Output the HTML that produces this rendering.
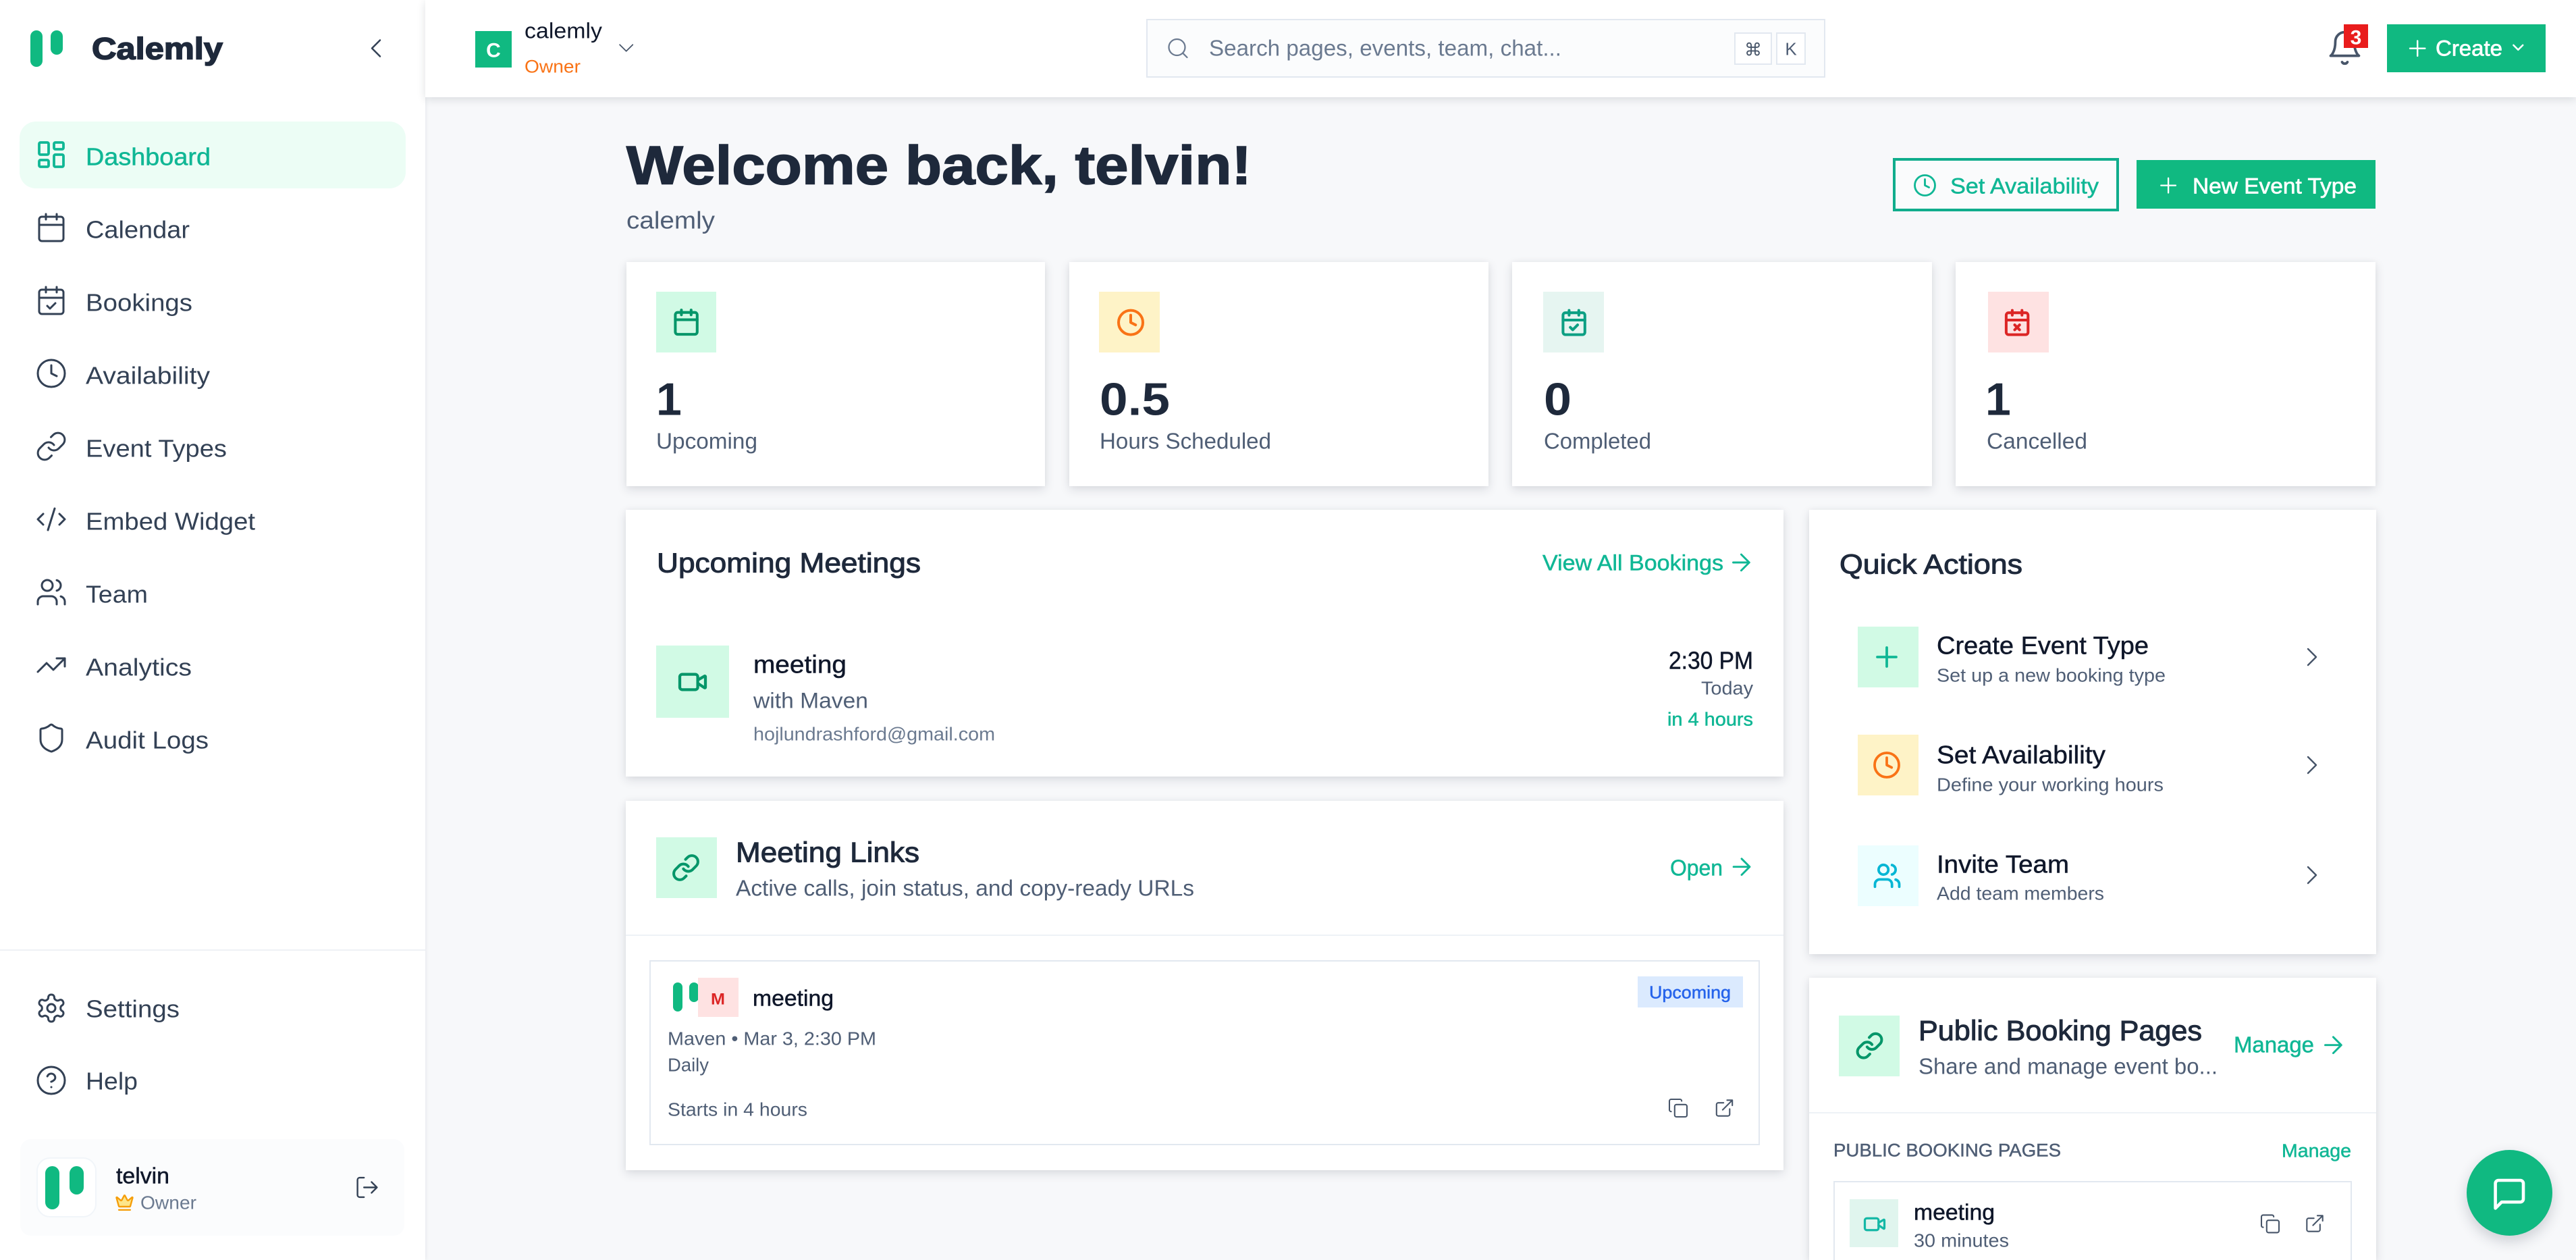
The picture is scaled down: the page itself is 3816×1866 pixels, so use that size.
<!DOCTYPE html>
<html lang="en"><head><meta charset="utf-8"><title>Calemly Dashboard</title>
<style>
html,body{margin:0;padding:0;width:3816px;height:1866px;overflow:hidden;background:#f7f8fa}
#root{position:relative;width:3816px;height:1866px;overflow:hidden;contain:paint}
.a{position:absolute;box-sizing:border-box}
.card{background:#fff;box-shadow:0 5px 14px rgba(30,41,59,.13),0 0 8px rgba(30,41,59,.04)}
svg{position:absolute;left:0;top:0}
text{font-family:"Liberation Sans",sans-serif;fill:#334155;transform:translateY(1.5px)}
.nav{font-size:36px;fill:#334155}
.ink{fill:#0f172a}.ti{fill:#1e293b}.sl{fill:#4f5e75}.mu{fill:#6b7a90}.te{fill:#10b795}.wh{fill:#fff}
.m{stroke-width:.5px;paint-order:stroke}.m.ink{stroke:#0f172a}.m.te{stroke:#10b795}.m.wh{stroke:#fff}.m.sl{stroke:#4f5e75}
.s{stroke-width:1px;paint-order:stroke}.s.ti{stroke:#1e293b}.s.wh{stroke:#fff;stroke-width:.7px}
.b{font-weight:bold}
.hv{stroke:#1e293b;stroke-width:1.6px;paint-order:stroke}
.i{fill:none;stroke-linecap:round;stroke-linejoin:round}
</style></head>
<body>
<div id="root">
<div class="a" style="left:630px;top:0;width:3186px;height:1866px;background:#f7f8fa"></div>

<div class="a" style="left:0;top:0;width:630px;height:1866px;background:#fff;box-shadow:1px 0 5px rgba(30,41,59,.08)"></div>
<div class="a" style="left:29px;top:180px;width:572px;height:99px;background:#ecfdf5;border-radius:24px"></div>
<div class="a" style="left:0;top:1406px;width:630px;height:2px;background:#eef1f5"></div>
<div class="a" style="left:30px;top:1687px;width:569px;height:143px;background:#fbfcfd;border-radius:16px"></div>
<div class="a" style="left:54px;top:1714px;width:89px;height:89px;background:#fff;border:2px solid #f1f5f9;border-radius:20px"></div>

<div class="a" style="left:630px;top:0;width:3186px;height:144px;background:#fff;box-shadow:0 3px 12px rgba(30,41,59,.14)"></div>
<div class="a" style="left:704px;top:46px;width:54px;height:54px;background:#10b981"></div>
<div class="a" style="left:1698px;top:28px;width:1006px;height:87px;background:#fbfcfd;border:2px solid #e2e8f0"></div>
<div class="a" style="left:2569px;top:48px;width:56px;height:48px;background:#fff;border:2px solid #e2e8f0"></div>
<div class="a" style="left:2631px;top:48px;width:44px;height:48px;background:#fff;border:2px solid #e2e8f0"></div>
<div class="a" style="left:3536px;top:36px;width:235px;height:71px;background:#10b981"></div>

<div class="a" style="left:2804px;top:234px;width:335px;height:79px;background:#fafbfc;border:4px solid #10ad8c"></div>
<div class="a" style="left:3165px;top:237px;width:354px;height:72px;background:#10b981"></div>

<div class="a card" style="left:928px;top:388px;width:620px;height:332px"></div>
<div class="a card" style="left:1584px;top:388px;width:621px;height:332px"></div>
<div class="a card" style="left:2240px;top:388px;width:622px;height:332px"></div>
<div class="a card" style="left:2897px;top:388px;width:622px;height:332px"></div>
<div class="a" style="left:972px;top:432px;width:89px;height:90px;background:#d1fae5"></div>
<div class="a" style="left:1628px;top:432px;width:90px;height:90px;background:#fef3c7"></div>
<div class="a" style="left:2286px;top:432px;width:90px;height:90px;background:#e6f5f1"></div>
<div class="a" style="left:2945px;top:432px;width:90px;height:90px;background:#fee2e2"></div>

<div class="a card" style="left:927px;top:755px;width:1715px;height:395px"></div>
<div class="a" style="left:972px;top:956px;width:108px;height:107px;background:#d1fae5"></div>

<div class="a card" style="left:927px;top:1186px;width:1715px;height:547px"></div>
<div class="a" style="left:927px;top:1384px;width:1715px;height:2px;background:#eef2f6"></div>
<div class="a" style="left:972px;top:1240px;width:90px;height:90px;background:#d1fae5"></div>
<div class="a" style="left:962px;top:1422px;width:1645px;height:274px;background:#fff;border:2px solid #e2e8f0"></div>
<div class="a" style="left:997px;top:1455px;width:14px;height:43px;background:#10b981;border-radius:7px"></div>
<div class="a" style="left:1021px;top:1455px;width:14px;height:29px;background:#10b981;border-radius:7px"></div>
<div class="a" style="left:1034px;top:1448px;width:60px;height:58px;background:#fee2e2"></div>
<div class="a" style="left:2426px;top:1446px;width:156px;height:46px;background:#dbeafe"></div>

<div class="a card" style="left:2680px;top:755px;width:840px;height:658px"></div>
<div class="a" style="left:2752px;top:928px;width:90px;height:90px;background:#d1fae5"></div>
<div class="a" style="left:2752px;top:1088px;width:90px;height:90px;background:#fef3c7"></div>
<div class="a" style="left:2752px;top:1252px;width:90px;height:90px;background:#ecfeff"></div>

<div class="a card" style="left:2680px;top:1448px;width:840px;height:418px"></div>
<div class="a" style="left:2680px;top:1647px;width:840px;height:2px;background:#eef2f6"></div>
<div class="a" style="left:2724px;top:1504px;width:90px;height:90px;background:#d1fae5"></div>
<div class="a" style="left:2716px;top:1749px;width:768px;height:117px;background:#fff;border:2px solid #e2e8f0;border-bottom:0"></div>
<div class="a" style="left:2740px;top:1776px;width:72px;height:71px;background:#e0f5ee"></div>

<div class="a" style="left:3654px;top:1703px;width:127px;height:127px;border-radius:50%;background:#10b981;box-shadow:0 8px 20px rgba(30,41,59,.2)"></div>

<svg width="3816" height="1866" viewBox="0 0 3816 1866" xmlns="http://www.w3.org/2000/svg">
<defs>
<g id="calendar"><path d="M8 2v4M16 2v4"/><rect x="3" y="4" width="18" height="18" rx="2"/><path d="M3 10h18"/></g>
<g id="calcheck"><path d="M8 2v4M16 2v4"/><rect x="3" y="4" width="18" height="18" rx="2"/><path d="M3 10h18M9 16l2 2 4-4"/></g>
<g id="calx"><path d="M8 2v4M16 2v4"/><rect x="3" y="4" width="18" height="18" rx="2"/><path d="M3 10h18M14 14l-4 4M10 14l4 4"/></g>
<g id="dash"><rect x="3" y="3" width="7" height="9" rx="1"/><rect x="14" y="3" width="7" height="5" rx="1"/><rect x="14" y="12" width="7" height="9" rx="1"/><rect x="3" y="16" width="7" height="5" rx="1"/></g>
<g id="clock"><circle cx="12" cy="12" r="10"/><path d="M12 6v6l4 2"/></g>
<g id="link"><path d="M10 13a5 5 0 0 0 7.54.54l3-3a5 5 0 0 0-7.07-7.07l-1.72 1.71"/><path d="M14 11a5 5 0 0 0-7.54-.54l-3 3a5 5 0 0 0 7.07 7.07l1.71-1.71"/></g>
<g id="code"><path d="M18 16l4-4-4-4M6 8l-4 4 4 4M14.5 4l-5 16"/></g>
<g id="users"><path d="M16 21v-2a4 4 0 0 0-4-4H6a4 4 0 0 0-4 4v2"/><circle cx="9" cy="7" r="4"/><path d="M22 21v-2a4 4 0 0 0-3-3.87M16 3.13a4 4 0 0 1 0 7.75"/></g>
<g id="trend"><path d="M22 7l-8.5 8.5-5-5L2 17"/><path d="M16 7h6v6"/></g>
<g id="shield"><path d="M20 13c0 5-3.5 7.5-7.66 8.95a1 1 0 0 1-.67-.01C7.5 20.5 4 18 4 13V6a1 1 0 0 1 1-1c2 0 4.5-1.2 6.24-2.72a1.17 1.17 0 0 1 1.52 0C14.51 3.81 17 5 19 5a1 1 0 0 1 1 1z"/></g>
<g id="gear"><path d="M12.22 2h-.44a2 2 0 0 0-2 2v.18a2 2 0 0 1-1 1.73l-.43.25a2 2 0 0 1-2 0l-.15-.08a2 2 0 0 0-2.73.73l-.22.38a2 2 0 0 0 .73 2.73l.15.1a2 2 0 0 1 1 1.72v.51a2 2 0 0 1-1 1.74l-.15.09a2 2 0 0 0-.73 2.73l.22.38a2 2 0 0 0 2.73.73l.15-.08a2 2 0 0 1 2 0l.43.25a2 2 0 0 1 1 1.73V20a2 2 0 0 0 2 2h.44a2 2 0 0 0 2-2v-.18a2 2 0 0 1 1-1.73l.43-.25a2 2 0 0 1 2 0l.15.08a2 2 0 0 0 2.73-.73l.22-.39a2 2 0 0 0-.73-2.73l-.15-.08a2 2 0 0 1-1-1.74v-.5a2 2 0 0 1 1-1.74l.15-.09a2 2 0 0 0 .73-2.73l-.22-.38a2 2 0 0 0-2.73-.73l-.15.08a2 2 0 0 1-2 0l-.43-.25a2 2 0 0 1-1-1.73V4a2 2 0 0 0-2-2z"/><circle cx="12" cy="12" r="3"/></g>
<g id="help"><circle cx="12" cy="12" r="10"/><path d="M9.09 9a3 3 0 0 1 5.83 1c0 2-3 3-3 3M12 17h.01"/></g>
<g id="logout"><path d="M9 21H5a2 2 0 0 1-2-2V5a2 2 0 0 1 2-2h4M16 17l5-5-5-5M21 12H9"/></g>
<g id="cl"><path d="M15 18l-6-6 6-6"/></g>
<g id="cr"><path d="M9 18l6-6-6-6"/></g>
<g id="cd"><path d="M6 9l6 6 6-6"/></g>
<g id="search"><circle cx="11" cy="11" r="8"/><path d="M21 21l-4.3-4.3"/></g>
<g id="bell"><path d="M6 8a6 6 0 0 1 12 0c0 7 3 9 3 9H3s3-2 3-9"/><path d="M10.3 21a1.94 1.94 0 0 0 3.4 0"/></g>
<g id="plus"><path d="M5 12h14M12 5v14"/></g>
<g id="arrow"><path d="M5 12h14M12 5l7 7-7 7"/></g>
<g id="video"><path d="M16 13l5.223 3.482a.5.5 0 0 0 .777-.416V7.87a.5.5 0 0 0-.752-.432L16 10.5"/><rect x="2" y="6" width="14" height="12" rx="2"/></g>
<g id="copy"><rect x="8" y="8" width="14" height="14" rx="2"/><path d="M4 16c-1.1 0-2-.9-2-2V4c0-1.1.9-2 2-2h10c1.1 0 2 .9 2 2"/></g>
<g id="ext"><path d="M15 3h6v6M10 14L21 3M18 13v6a2 2 0 0 1-2 2H5a2 2 0 0 1-2-2V8a2 2 0 0 1 2-2h6"/></g>
<g id="msg"><path d="M21 15a2 2 0 0 1-2 2H7l-4 4V5a2 2 0 0 1 2-2h14a2 2 0 0 1 2 2z"/></g>
<g id="crown"><path d="M11.562 3.266a.5.5 0 0 1 .876 0L15.39 8.87a1 1 0 0 0 1.516.294L21.183 5.5a.5.5 0 0 1 .798.519l-2.834 10.246a1 1 0 0 1-.956.734H5.81a1 1 0 0 1-.957-.734L2.02 6.02a.5.5 0 0 1 .798-.519l4.276 3.664a1 1 0 0 0 1.516-.294z"/><path d="M5 21h14"/></g>
</defs>

<!-- logo -->
<rect x="45" y="45" width="18" height="54" rx="9" fill="#10b981"/>
<rect x="75" y="45" width="18" height="36" rx="9" fill="#10b981"/>
<text x="136" y="86" font-size="45" class="ti b hv" textLength="194" lengthAdjust="spacingAndGlyphs">Calemly</text>
<g class="i" stroke="#334155" stroke-width="1.5">
<use href="#cl" stroke-width="1.25" transform="translate(533 47.5) scale(2)"/>
<use href="#calendar" transform="translate(52 313) scale(2)"/>
<use href="#calcheck" transform="translate(52 421) scale(2)"/>
<use href="#clock" transform="translate(52 529) scale(2)"/>
<use href="#link" transform="translate(52 637) scale(2)"/>
<use href="#code" transform="translate(52 745) scale(2)"/>
<use href="#users" transform="translate(52 853) scale(2)"/>
<use href="#trend" transform="translate(52 961) scale(2)"/>
<use href="#shield" transform="translate(52 1069) scale(2)"/>
<use href="#gear" transform="translate(52 1469) scale(2)"/>
<use href="#help" transform="translate(52 1576) scale(2)"/>
<use href="#logout" transform="translate(524.8 1739.3) scale(1.6)"/>
</g>
<use href="#dash" class="i" stroke="#10b795" stroke-width="1.9" transform="translate(52 205) scale(2)"/>

<text x="127" y="243" class="nav m" style="fill:#10b795;stroke:#10b795" textLength="185" lengthAdjust="spacingAndGlyphs">Dashboard</text>
<text x="127" y="351" class="nav" textLength="154" lengthAdjust="spacingAndGlyphs">Calendar</text>
<text x="127" y="459" class="nav" textLength="158" lengthAdjust="spacingAndGlyphs">Bookings</text>
<text x="127" y="567" class="nav" textLength="184" lengthAdjust="spacingAndGlyphs">Availability</text>
<text x="127" y="675" class="nav" textLength="209" lengthAdjust="spacingAndGlyphs">Event Types</text>
<text x="127" y="783" class="nav" textLength="251" lengthAdjust="spacingAndGlyphs">Embed Widget</text>
<text x="127" y="891" class="nav" textLength="92" lengthAdjust="spacingAndGlyphs">Team</text>
<text x="127" y="999" class="nav" textLength="157" lengthAdjust="spacingAndGlyphs">Analytics</text>
<text x="127" y="1107" class="nav" textLength="182" lengthAdjust="spacingAndGlyphs">Audit Logs</text>
<text x="127" y="1505" class="nav" textLength="139" lengthAdjust="spacingAndGlyphs">Settings</text>
<text x="127" y="1612" class="nav" textLength="77" lengthAdjust="spacingAndGlyphs">Help</text>

<rect x="67" y="1727" width="21" height="64" rx="10.5" fill="#10b981"/>
<rect x="103" y="1727" width="21" height="42" rx="10.5" fill="#10b981"/>
<text x="172" y="1751" font-size="33" class="ink m" textLength="79" lengthAdjust="spacingAndGlyphs">telvin</text>
<use href="#crown" fill="#fde68a" stroke="#f59e0b" stroke-width="2" stroke-linecap="round" stroke-linejoin="round" transform="translate(170.1 1766.6) scale(1.2)"/>
<text x="208" y="1789" font-size="28" class="mu" textLength="83" lengthAdjust="spacingAndGlyphs">Owner</text>

<!-- header -->
<text x="731" y="83" font-size="30" class="wh b" text-anchor="middle">C</text>
<text x="777" y="55" font-size="32" class="ink" textLength="115" lengthAdjust="spacingAndGlyphs">calemly</text>
<text x="777" y="106" font-size="27" style="fill:#f97316" textLength="83" lengthAdjust="spacingAndGlyphs">Owner</text>
<use href="#cd" class="i" stroke="#475569" stroke-width="1.1" transform="translate(908.5 51.8) scale(1.6)"/>
<use href="#search" class="i" stroke="#6b7a90" stroke-width="1.5" transform="translate(1727 53.5) scale(1.5)"/>
<text x="1791" y="81" font-size="33" class="mu" textLength="522" lengthAdjust="spacingAndGlyphs">Search pages, events, team, chat...</text>
<text x="2597" y="81" font-size="26" text-anchor="middle" style="font-family:'DejaVu Sans',sans-serif;fill:#475569">⌘</text>
<text x="2653" y="80" font-size="26" text-anchor="middle" class="sl">K</text>
<use href="#bell" class="i" stroke="#475569" stroke-width="1.6" transform="translate(3445.5 43) scale(2.33)"/>
<rect x="3472" y="36" width="36" height="35" fill="#e91c1c"/>
<text x="3490" y="64" font-size="30" class="wh b" text-anchor="middle">3</text>
<use href="#plus" class="i" stroke="#fff" stroke-width="1.5" transform="translate(3562 52.5) scale(1.6)"/>
<text x="3608" y="81" font-size="32" class="wh s" textLength="99" lengthAdjust="spacingAndGlyphs">Create</text>
<use href="#cd" class="i" stroke="#fff" stroke-width="2.2" transform="translate(3716.5 56.5) scale(1.15)"/>

<!-- title -->
<text x="928" y="271" font-size="81" class="ti b hv" textLength="926" lengthAdjust="spacingAndGlyphs">Welcome back, telvin!</text>
<text x="928" y="337" font-size="36" class="sl" textLength="131" lengthAdjust="spacingAndGlyphs">calemly</text>
<use href="#clock" class="i" stroke="#10b795" stroke-width="1.9" transform="translate(2833.5 256.5) scale(1.5)"/>
<text x="2889" y="285" font-size="32" class="te m" textLength="220" lengthAdjust="spacingAndGlyphs">Set Availability</text>
<use href="#plus" class="i" stroke="#fff" stroke-width="1.5" transform="translate(3193.5 256) scale(1.55)"/>
<text x="3248" y="285" font-size="32" class="wh s" textLength="243" lengthAdjust="spacingAndGlyphs">New Event Type</text>

<!-- stats -->
<use href="#calendar" class="i" stroke="#059669" stroke-width="2.25" transform="translate(995 455.5) scale(1.8)"/>
<use href="#clock" class="i" stroke="#f97316" stroke-width="2.25" transform="translate(1653.4 456) scale(1.8)"/>
<use href="#calcheck" class="i" stroke="#0d9f83" stroke-width="2.25" transform="translate(2310 456) scale(1.8)"/>
<use href="#calx" class="i" stroke="#dc2626" stroke-width="2.25" transform="translate(2966.5 456) scale(1.8)"/>
<text x="972" y="613" font-size="68" class="ti b">1</text>
<text x="1629" y="613" font-size="68" class="ti b" textLength="104" lengthAdjust="spacingAndGlyphs">0.5</text>
<text x="2287" y="613" font-size="68" class="ti b" textLength="41" lengthAdjust="spacingAndGlyphs">0</text>
<text x="2941" y="613" font-size="68" class="ti b">1</text>
<text x="972" y="663" font-size="33" class="sl" textLength="150" lengthAdjust="spacingAndGlyphs">Upcoming</text>
<text x="1629" y="663" font-size="33" class="sl" textLength="254" lengthAdjust="spacingAndGlyphs">Hours Scheduled</text>
<text x="2287" y="663" font-size="33" class="sl" textLength="159" lengthAdjust="spacingAndGlyphs">Completed</text>
<text x="2943" y="663" font-size="33" class="sl" textLength="149" lengthAdjust="spacingAndGlyphs">Cancelled</text>

<!-- upcoming meetings -->
<text x="973" y="846" font-size="41" class="ti s" textLength="391" lengthAdjust="spacingAndGlyphs">Upcoming Meetings</text>
<text x="2285" y="843" font-size="32" class="te m" textLength="268" lengthAdjust="spacingAndGlyphs">View All Bookings</text>
<use href="#arrow" class="i" stroke="#10b795" stroke-width="1.7" transform="translate(2559 812.6) scale(1.7)"/>
<use href="#video" class="i" stroke="#059669" stroke-width="2.25" transform="translate(1003.2 987.2) scale(1.9)"/>
<text x="1116" y="995" font-size="37" class="ink m" textLength="138" lengthAdjust="spacingAndGlyphs">meeting</text>
<text x="1116" y="1047" font-size="32" class="sl" textLength="170" lengthAdjust="spacingAndGlyphs">with Maven</text>
<text x="1116" y="1095" font-size="28" class="mu" textLength="358" lengthAdjust="spacingAndGlyphs">hojlundrashford@gmail.com</text>
<text x="2472" y="989" font-size="36" class="ink m" textLength="125" lengthAdjust="spacingAndGlyphs">2:30 PM</text>
<text x="2520" y="1027" font-size="28" class="sl" textLength="77" lengthAdjust="spacingAndGlyphs">Today</text>
<text x="2470" y="1073" font-size="28" class="te m" textLength="127" lengthAdjust="spacingAndGlyphs">in 4 hours</text>

<!-- meeting links -->
<use href="#link" class="i" stroke="#059669" stroke-width="2.25" transform="translate(994.4 1263.4) scale(1.8)"/>
<text x="1090" y="1275" font-size="42" class="ti s" textLength="272" lengthAdjust="spacingAndGlyphs">Meeting Links</text>
<text x="1090" y="1325" font-size="33" class="sl" textLength="679" lengthAdjust="spacingAndGlyphs">Active calls, join status, and copy-ready URLs</text>
<text x="2474" y="1295" font-size="33" class="te m" textLength="78" lengthAdjust="spacingAndGlyphs">Open</text>
<use href="#arrow" class="i" stroke="#10b795" stroke-width="1.7" transform="translate(2559.6 1263.3) scale(1.7)"/>
<text x="1053" y="1486" font-size="24" class="b" style="fill:#dc2626" textLength="21" lengthAdjust="spacingAndGlyphs">M</text>
<text x="1115" y="1488" font-size="33" class="ink m" textLength="120" lengthAdjust="spacingAndGlyphs">meeting</text>
<text x="2443" y="1477" font-size="26" class="m" style="fill:#2563eb;stroke:#2563eb" textLength="121" lengthAdjust="spacingAndGlyphs">Upcoming</text>
<text x="989" y="1546" font-size="28" class="sl" textLength="309" lengthAdjust="spacingAndGlyphs">Maven • Mar 3, 2:30 PM</text>
<text x="989" y="1585" font-size="28" class="sl" textLength="61" lengthAdjust="spacingAndGlyphs">Daily</text>
<text x="989" y="1651" font-size="28" class="sl" textLength="207" lengthAdjust="spacingAndGlyphs">Starts in 4 hours</text>
<use href="#copy" class="i" stroke="#475569" stroke-width="1.6" transform="translate(2470.4 1625.4) scale(1.3)"/>
<use href="#ext" class="i" stroke="#475569" stroke-width="1.6" transform="translate(2538.9 1625.4) scale(1.3)"/>

<!-- quick actions -->
<text x="2725" y="848" font-size="41" class="ti s" textLength="271" lengthAdjust="spacingAndGlyphs">Quick Actions</text>
<use href="#plus" class="i" stroke="#10b795" stroke-width="1.9" transform="translate(2771 949) scale(2)"/>
<use href="#clock" class="i" stroke="#f97316" stroke-width="2.1" transform="translate(2773.4 1111.4) scale(1.8)"/>
<use href="#users" class="i" stroke="#06b6d4" stroke-width="2.1" transform="translate(2773.9 1275.4) scale(1.8)"/>
<text x="2869" y="967" font-size="37" class="ink m" textLength="314" lengthAdjust="spacingAndGlyphs">Create Event Type</text>
<text x="2869" y="1008" font-size="28" class="sl" textLength="339" lengthAdjust="spacingAndGlyphs">Set up a new booking type</text>
<text x="2869" y="1129" font-size="37" class="ink m" textLength="250" lengthAdjust="spacingAndGlyphs">Set Availability</text>
<text x="2869" y="1170" font-size="28" class="sl" textLength="336" lengthAdjust="spacingAndGlyphs">Define your working hours</text>
<text x="2869" y="1291" font-size="37" class="ink m" textLength="196" lengthAdjust="spacingAndGlyphs">Invite Team</text>
<text x="2869" y="1331" font-size="28" class="sl" textLength="248" lengthAdjust="spacingAndGlyphs">Add team members</text>
<g class="i" stroke="#475569" stroke-width="1.2">
<use href="#cr" transform="translate(3401 949) scale(2)"/>
<use href="#cr" transform="translate(3401 1109) scale(2)"/>
<use href="#cr" transform="translate(3401 1272) scale(2)"/>
</g>

<!-- public booking -->
<use href="#link" class="i" stroke="#059669" stroke-width="2.25" transform="translate(2747.9 1527.1) scale(1.8)"/>
<text x="2842" y="1539" font-size="42" class="ti s" textLength="420" lengthAdjust="spacingAndGlyphs">Public Booking Pages</text>
<text x="2842" y="1589" font-size="33" class="sl" textLength="443" lengthAdjust="spacingAndGlyphs">Share and manage event bo...</text>
<text x="3309" y="1557" font-size="33" class="te m" textLength="119" lengthAdjust="spacingAndGlyphs">Manage</text>
<use href="#arrow" class="i" stroke="#10b795" stroke-width="1.7" transform="translate(3436 1527.3) scale(1.7)"/>
<text x="2716" y="1711" font-size="27" class="sl m" textLength="337" lengthAdjust="spacingAndGlyphs">PUBLIC BOOKING PAGES</text>
<text x="3380" y="1712" font-size="28" class="te m" textLength="103" lengthAdjust="spacingAndGlyphs">Manage</text>
<use href="#video" class="i" stroke="#14b8a6" stroke-width="2.25" transform="translate(2759.6 1795.6) scale(1.45)"/>
<text x="2835" y="1805" font-size="33" class="ink m" textLength="120" lengthAdjust="spacingAndGlyphs">meeting</text>
<text x="2835" y="1845" font-size="28" class="sl" textLength="141" lengthAdjust="spacingAndGlyphs">30 minutes</text>
<use href="#copy" class="i" stroke="#475569" stroke-width="1.6" transform="translate(3347.4 1796.8) scale(1.3)"/>
<use href="#ext" class="i" stroke="#475569" stroke-width="1.6" transform="translate(3413.4 1796.4) scale(1.3)"/>

<!-- chat -->
<use href="#msg" class="i" stroke="#fff" stroke-width="2" transform="translate(3689.7 1741.1) scale(2.3)"/>
</svg>
</div>
</body></html>
